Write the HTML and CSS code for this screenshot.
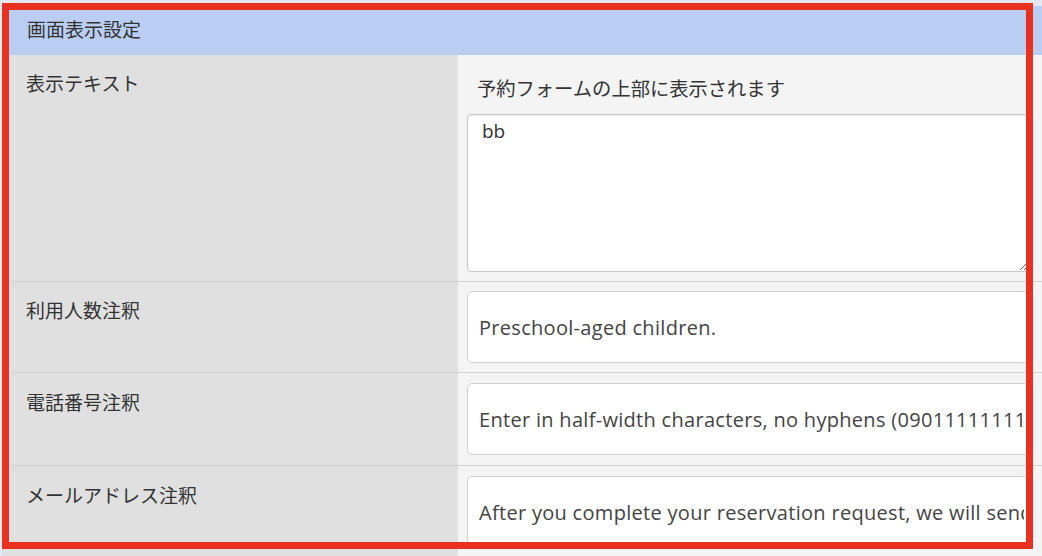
FILE: index.html
```html
<!DOCTYPE html>
<html>
<head lang="ja">
    <meta charset="UTF-8">
    <title>画面表示設定</title>
    <link rel="stylesheet" href="styles.css">
</head>
<body>

<div class="panel">
    <div class="panel-head">画面表示設定</div>

    <div class="row">
        <div class="label">表示テキスト</div>
        <div class="field">
            <p class="help">予約フォームの上部に表示されます</p>
            <textarea class="area">bb</textarea>
        </div>
    </div>

    <div class="row">
        <div class="label">利用人数注釈</div>
        <div class="field">
            <input class="text" type="text" value="Preschool-aged children.">
        </div>
    </div>

    <div class="row wide">
        <div class="label">電話番号注釈</div>
        <div class="field">
            <input class="text" type="text" value="Enter in half-width characters, no hyphens (09011111111)">
        </div>
    </div>

    <div class="row wide">
        <div class="label">メールアドレス注釈</div>
        <div class="field">
            <input class="text" type="text" value="After you complete your reservation request, we will send you a confirmation email.">
        </div>
    </div>
</div>

<!-- 赤枠 -->
<div class="frame"></div>

</body>
</html>
```

FILE: styles.css
```css
* {
    padding: 0;
    margin: 0;
    box-sizing: border-box;
}
body {
    background: #e4e9f3;
    font: 19px/28px "Open Sans", "Noto Sans CJK JP", sans-serif;
    color: #333;
    overflow: hidden;
}
.panel {
    margin: 6px 0 0 2px;
    background: #f4f4f4;
}
.panel-head {
    height: 49px;
    line-height: 49px;
    padding-left: 25px;
    background: #bacef3;
}
.row {
    display: grid;
    grid-template-columns: 456px 1fr;
    border-bottom: 1px solid #d2d2d2;
}
.label {
    padding: 15px 24px;
    background: #e0e0e0;
}
.field {
    padding: 9px 13px 9px 9px;
}
.wide .field {
    padding-top: 10px;
    padding-bottom: 10px;
}
.wide .label {
    padding-top: 16px;
}
.help {
    padding: 11px 0 11px 10px;
    font-size: 19.3px;
}
.area {
    display: block;
    width: 100%;
    height: 158px;
    padding: 2px 14px;
    font: inherit;
    color: #333;
    border: 1px solid #c8c8c8;
    border-radius: 4px;
    box-shadow: inset 0 1px 1px rgba(0,0,0,0.08);
}
.text {
    display: block;
    width: 100%;
    height: 72px;
    padding: 0 4px 0 11px;
    font-size: 20px;
    font-family: inherit;
    letter-spacing: 0.3px;
    color: #444;
    border: 1px solid #d0d0d0;
    border-radius: 5px;
    background: #fff;
}
.frame {
    position: absolute;
    left: 2px;
    top: 3px;
    width: 1031px;
    height: 546px;
    border: 7px solid #e8321f;
}
```
